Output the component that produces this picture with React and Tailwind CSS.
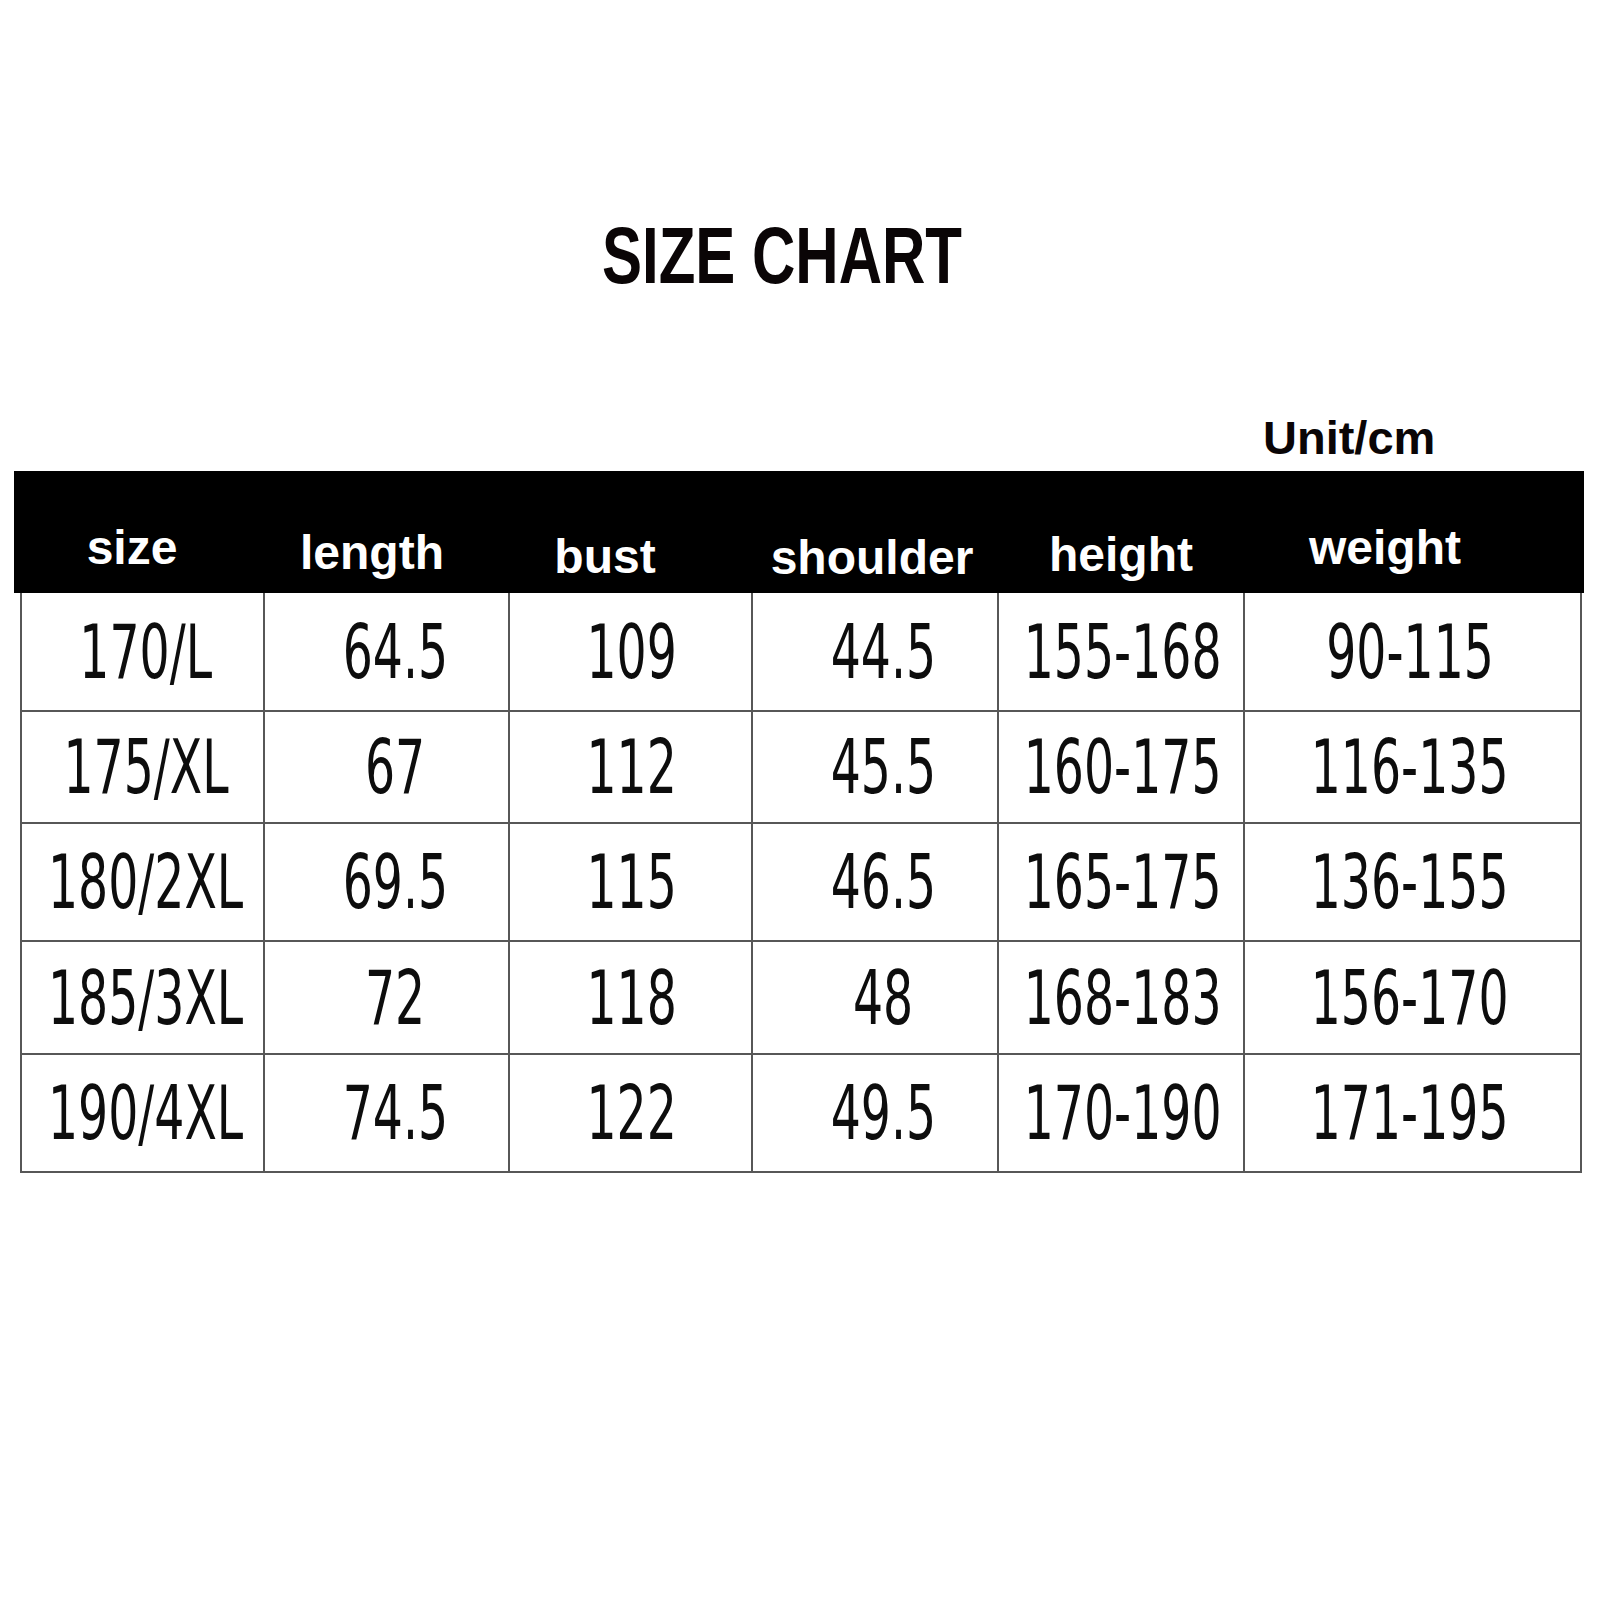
import React from "react";

const cols = [
  { head: "size", hpad: "pr-[15px]", hpt: "pt-[53px]", bpad: "pl-[7px]" },
  { head: "length", hpad: "pr-[31px]", hpt: "pt-[58px]", bpad: "pl-[17px]" },
  { head: "bust", hpad: "pr-[53px]", hpt: "pt-[62px]", bpad: "pl-[3px]" },
  { head: "shoulder", hpad: "pr-[8px]", hpt: "pt-[63px]", bpad: "pl-[16px]" },
  { head: "height", hpad: "pr-[2px]", hpt: "pt-[60px]", bpad: "pl-[4px]" },
  { head: "weight", hpad: "pr-[59px]", hpt: "pt-[53px]", bpad: "pr-[5px]" },
];

const rows = [
  { h: "h-[119px]", cells: ["170/L", "64.5", "109", "44.5", "155-168", "90-115"] },
  { h: "h-[112px]", cells: ["175/XL", "67", "112", "45.5", "160-175", "116-135"] },
  { h: "h-[118px]", cells: ["180/2XL", "69.5", "115", "46.5", "165-175", "136-155"] },
  { h: "h-[113px]", cells: ["185/3XL", "72", "118", "48", "168-183", "156-170"] },
  { h: "h-[118px]", cells: ["190/4XL", "74.5", "122", "49.5", "170-190", "171-195"] },
];

export default function App() {
  return (
    <div className="w-[1601px] h-[1601px] bg-white flex flex-col font-['Liberation_Sans',Arial,sans-serif]">
      <div className="mt-[216px] h-[80px] flex justify-center pr-[38px]">
        <span className="inline-block scale-x-[0.75] text-[80px] leading-[80px] font-bold text-[#0a0506] whitespace-nowrap">
          SIZE CHART
        </span>
      </div>

      <div className="mt-[118px] h-[47px] pl-[1263px]">
        <span className="text-[47px] leading-[47px] font-bold text-[#0a0506] whitespace-nowrap">
          Unit/cm
        </span>
      </div>

      <div className="mt-[10px] ml-[14px] w-[1570px] h-[122px] bg-black grid grid-cols-[251px_245px_243px_246px_246px_339px]">
        {cols.map((c) => (
          <div key={c.head} className={`flex justify-center ${c.hpad} ${c.hpt}`}>
            <span className="text-[48px] leading-[48px] font-bold text-white whitespace-nowrap">
              {c.head}
            </span>
          </div>
        ))}
      </div>

      <div className="ml-[20px] w-[1562px] border-l-2 border-[#575757] flex flex-col font-['DejaVu_Sans',sans-serif]">
        {rows.map((r, ri) => (
          <div
            key={ri}
            className={`grid grid-cols-[243px_245px_243px_246px_246px_337px] ${r.h}`}
          >
            {r.cells.map((v, ci) => (
              <div
                key={ci}
                className={`flex items-center justify-center border-r-2 border-b-2 border-[#575757] ${cols[ci].bpad}`}
              >
                <span className="inline-block scale-x-[0.64] text-[74px] leading-[74px] text-[#0d0d0d] whitespace-nowrap">
                  {v}
                </span>
              </div>
            ))}
          </div>
        ))}
      </div>
    </div>
  );
}
